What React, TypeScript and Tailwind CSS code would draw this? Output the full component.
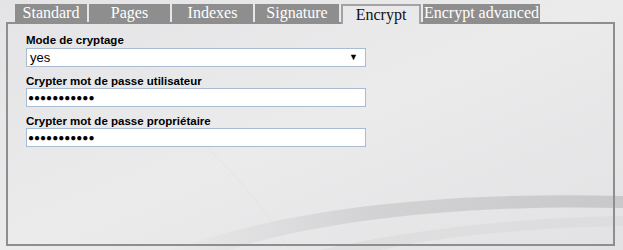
import React from 'react'

const tabs = [
  { label: 'Standard', w: 'w-[72px]' },
  { label: 'Pages', w: 'w-[81px]' },
  { label: 'Indexes', w: 'w-[81px]' },
  { label: 'Signature', w: 'w-[84px]' },
  { label: 'Encrypt', w: 'w-[80px]', active: true },
  { label: 'Encrypt advanced', w: 'w-[117px]' },
]

function Swoosh() {
  return (
    <svg className="absolute inset-0 pointer-events-none" width="623" height="250" viewBox="0 0 623 250">
      <defs>
        <linearGradient id="bg" x1="0" y1="0" x2="1" y2="1">
          <stop offset="0" stopColor="#e4e4e6" />
          <stop offset="0.5" stopColor="#ebebec" />
          <stop offset="1" stopColor="#e2e2e4" />
        </linearGradient>
        <linearGradient id="sw" x1="0" y1="0" x2="1" y2="0">
          <stop offset="0" stopColor="#d0d0d2" stopOpacity="0" />
          <stop offset="0.45" stopColor="#cdcdcf" stopOpacity="0.8" />
          <stop offset="1" stopColor="#c8c8ca" />
        </linearGradient>
      </defs>
      <rect width="623" height="250" fill="url(#bg)" />
      <path d="M170 250 C 300 205, 450 192, 623 196 L 623 208 C 470 204, 320 220, 230 250 Z" fill="url(#sw)" />
      <path d="M320 250 C 420 228, 520 218, 623 216 L 623 226 C 520 228, 430 238, 380 250 Z" fill="#d8d8da" opacity="0.6" />
      <path d="M200 140 C 230 170, 260 200, 290 250" stroke="#dedee0" strokeWidth="1" fill="none" opacity="0.5" />
    </svg>
  )
}

export default function App() {
  return (
    <div className="relative w-[623px] h-[250px] overflow-hidden bg-[#e8e8ea] font-['Liberation_Sans',Arial,sans-serif]">
      <Swoosh />
      <div className="relative pt-[4px] pl-[6px]">
        <div className="flex gap-[2px] pl-[9px] relative z-10">
          {tabs.map((t) =>
            t.active ? (
              <div
                key={t.label}
                className={`${t.w} h-[20px] -mb-[2px] border-2 border-b-0 border-[#a3a3a3] bg-[#e9e9eb] text-[#111] flex items-center justify-center font-['Liberation_Serif',serif] text-[16px] leading-none`}
              >
                {t.label}
              </div>
            ) : (
              <div
                key={t.label}
                className={`${t.w} h-[18px] bg-[#8e8e8e] text-white flex items-center justify-center font-['Liberation_Serif',serif] text-[16px] leading-none whitespace-nowrap`}
              >
                {t.label}
              </div>
            )
          )}
        </div>
        <div className="w-[609px] h-[224px] border-2 border-[#8e8e8e] px-[18px] pt-[9px]">
          <div className="text-[11.5px] font-bold text-black leading-[14px]">Mode de cryptage</div>
          <div className="mt-[1px] w-[340px] h-[19px] bg-white border border-[#a9bcd3] flex items-center justify-between pl-[3px] pr-[7px]">
            <span className="text-[13px] text-black">yes</span>
            <span className="text-[9px] text-black">▼</span>
          </div>
          <div className="mt-[7px] text-[11.5px] font-bold text-black leading-[14px]">Crypter mot de passe utilisateur</div>
          <div className="w-[340px] h-[19px] bg-white border border-[#a9bcd3] flex items-center pl-[1px]">
            <span className="text-[10px] tracking-[0px] text-black">●●●●●●●●●●●</span>
          </div>
          <div className="mt-[7px] text-[11.5px] font-bold text-black leading-[14px]">Crypter mot de passe propriétaire</div>
          <div className="w-[340px] h-[19px] bg-white border border-[#a9bcd3] flex items-center pl-[1px]">
            <span className="text-[10px] tracking-[0px] text-black">●●●●●●●●●●●</span>
          </div>
        </div>
      </div>
    </div>
  )
}
